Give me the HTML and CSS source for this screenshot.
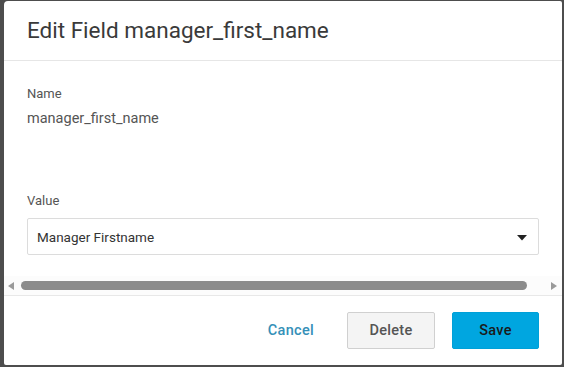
FILE: index.html
```html
<!DOCTYPE html>
<html>
<head>
<meta charset="utf-8">
<link rel="stylesheet" href="styles.css">
</head>
<body>
<div class="dialog">
  <div class="header">
    <h1 class="title">Edit Field manager_first_name</h1>
  </div>
  <div class="content">
    <div class="label">Name</div>
    <div class="static">manager_first_name</div>
    <div class="label label-value">Value</div>
    <div class="select">
      <span class="select-text">Manager Firstname</span>
      <svg class="caret" width="10" height="6" viewBox="0 0 10 6"><path d="M0 0 H10 L5 5.5 Z" fill="#222"/></svg>
    </div>
  </div>
  <div class="hscroll">
    <svg class="arrow" width="6" height="8" viewBox="0 0 6 8"><path d="M6 0 V8 L0 4 Z" fill="#9a9a9a"/></svg>
    <div class="track"><div class="thumb"></div></div>
    <svg class="arrow" width="6" height="8" viewBox="0 0 6 8"><path d="M0 0 V8 L6 4 Z" fill="#9a9a9a"/></svg>
  </div>
  <div class="footer">
    <button class="btn btn-link">Cancel</button>
    <button class="btn btn-default">Delete</button>
    <button class="btn btn-primary">Save</button>
  </div>
</div>
</body>
</html>
```
FILE: styles.css
```css
html, body {
  margin: 0;
  padding: 0;
  height: 100%;
}
body {
  background: #4d4d4d;
  font-family: Roboto, "Liberation Sans", sans-serif;
  overflow: hidden;
}
.dialog {
  margin: 1px 2px 2px 4px;
  height: 364px;
  background: #fff;
  border-radius: 4px 2px 2px 2px;
  display: flex;
  flex-direction: column;
  box-sizing: border-box;
}
.header {
  height: 59px;
  border-bottom: 1px solid #e6e6e6;
  padding-left: 23px;
  display: flex;
  align-items: center;
}
.title {
  margin: 0;
  font-size: 22.5px;
  font-weight: 400;
  color: #3a3a3a;
  position: relative;
  top: -1px;
}
.content {
  padding: 25px 23px 0 23px;
}
.label {
  font-size: 13px;
  line-height: 16px;
  color: #555;
}
.static {
  margin-top: 8px;
  font-size: 14.5px;
  line-height: 17px;
  color: #555;
}
.label-value {
  margin-top: 66px;
}
.select {
  margin-top: 9px;
  height: 37px;
  box-sizing: border-box;
  border: 1px solid #dcdcdc;
  border-radius: 2px;
  display: flex;
  align-items: center;
  justify-content: space-between;
  padding: 0 11px 0 9px;
}
.select-text {
  font-size: 13.5px;
  color: #333;
}
.caret {
  display: block;
  position: relative;
  top: 1px;
}
.hscroll {
  margin-top: 21px;
  height: 19px;
  display: flex;
  align-items: center;
  padding: 0 5px 0 4px;
  gap: 7px;
  background: #fcfcfc;
}
.arrow {
  display: block;
  flex: none;
}
.track {
  flex: 1;
  padding-right: 17px;
}
.thumb {
  height: 9px;
  border-radius: 5px;
  background: #8c8c8c;
}
.footer {
  border-top: 1px solid #e8e8e8;
  flex: 1;
  display: flex;
  justify-content: flex-end;
  align-items: flex-start;
  padding: 16px 23px 0 0;
  gap: 17px;
}
.btn {
  height: 37px;
  font-family: Roboto, "Liberation Sans", sans-serif;
  font-size: 14.5px;
  font-weight: 500;
  border-radius: 2px;
  cursor: pointer;
  letter-spacing: 0.3px;
}
.btn-link {
  background: none;
  border: none;
  color: #3590b8;
  padding: 0 16px;
}
.btn-default {
  width: 88px;
  background: #f4f4f4;
  border: 1px solid #d0d0d0;
  color: #555;
}
.btn-primary {
  width: 87px;
  background: #00a6e0;
  border: 1px solid #00a0d8;
  color: #1a1a1a;
}
```
